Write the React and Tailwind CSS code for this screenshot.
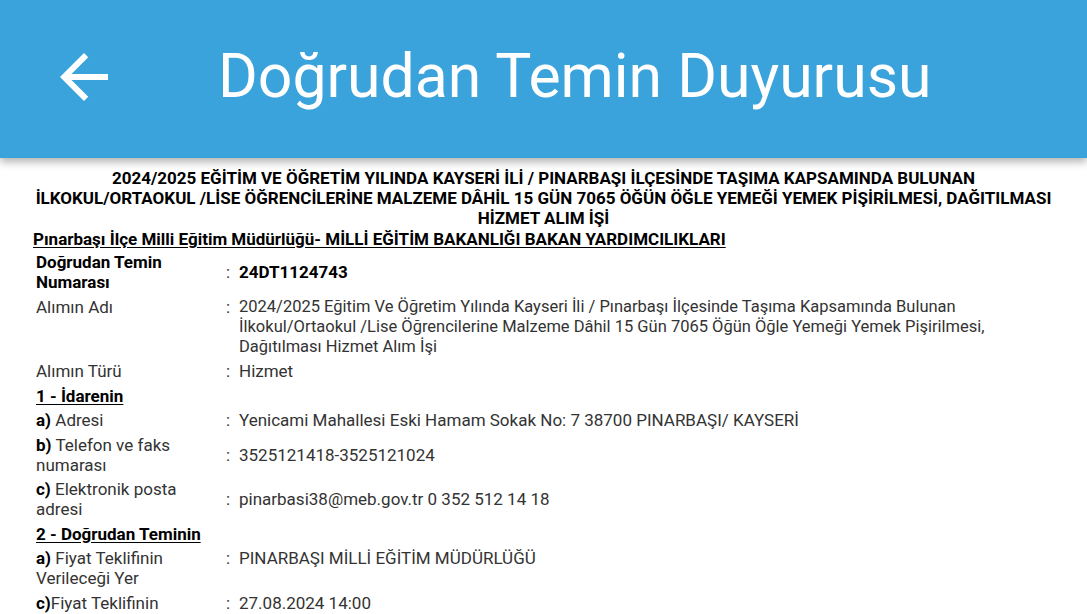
import React from "react";

const rows = [
  {
    label: <b className="font-bold text-black">Doğrudan Temin Numarası</b>,
    value: <b className="font-bold text-black">24DT1124743</b>,
    align: "items-center",
  },
  {
    label: "Alımın Adı",
    valueClass: "text-[16.5px]",
    value:
      "2024/2025 Eğitim Ve Öğretim Yılında Kayseri İli / Pınarbaşı İlçesinde Taşıma Kapsamında Bulunan İlkokul/Ortaokul /Lise Öğrencilerine Malzeme Dâhil 15 Gün 7065 Öğün Öğle Yemeği Yemek Pişirilmesi, Dağıtılması Hizmet Alım İşi",
  },
  { label: "Alımın Türü", value: "Hizmet" },
  { section: "1 - İdarenin" },
  { prefix: "a)", label: " Adresi", value: "Yenicami Mahallesi Eski Hamam Sokak No: 7 38700 PINARBAŞI/ KAYSERİ" },
  { prefix: "b)", label: " Telefon ve faks numarası", value: "3525121418-3525121024", align: "items-center" },
  { prefix: "c)", label: " Elektronik posta adresi", value: "pinarbasi38@meb.gov.tr 0 352 512 14 18", align: "items-center" },
  { section: "2 - Doğrudan Teminin" },
  { prefix: "a)", label: " Fiyat Teklifinin Verileceği Yer", value: "PINARBAŞI MİLLİ EĞİTİM MÜDÜRLÜĞÜ" },
  { prefix: "c)", label: "Fiyat Teklifinin", value: "27.08.2024 14:00" },
];

const Row = ({ row }) => {
  if (row.section) {
    return (
      <div className="py-[2.25px] px-[3px] font-bold text-black underline underline-offset-2">
        {row.section}
      </div>
    );
  }
  return (
    <div className={`flex py-[2.25px] ${row.align || "items-start"}`}>
      <div className="w-[191px] shrink-0 px-[3px]">
        {row.prefix && <b className="font-bold text-black">{row.prefix}</b>}
        {row.label}
      </div>
      <div className="flex w-[775px]">
        <span className="w-[15px] shrink-0 pl-[2px]">:</span>
        <div className={row.valueClass}>{row.value}</div>
      </div>
    </div>
  );
};

export default function App() {
  return (
    <div className="h-[614px] overflow-hidden bg-white font-['Roboto',sans-serif]">
      {/* App bar */}
      <div className="relative z-10 flex h-[158px] items-center bg-[#3ba3dc] shadow-[0_4px_8px_rgba(0,0,0,0.3)]">
        <button className="ml-[48px] -mt-[4px] text-white">
          <svg className="h-[72px] w-[72px]" viewBox="0 0 24 24" fill="currentColor">
            <path d="M20 11H7.83l5.59-5.59L12 4l-8 8 8 8 1.41-1.41L7.83 13H20v-2z" />
          </svg>
        </button>
        <h1 className="ml-[98px] pb-[4px] text-[60.7px] font-normal leading-none text-white">
          Doğrudan Temin Duyurusu
        </h1>
      </div>

      {/* Content */}
      <div className="px-[33px] pt-[10px] text-[17px] leading-[20px] text-[#333]">
        <p className="text-center font-bold text-black">
          2024/2025 EĞİTİM VE ÖĞRETİM YILINDA KAYSERİ İLİ / PINARBAŞI İLÇESİNDE TAŞIMA KAPSAMINDA BULUNAN
          <br />
          İLKOKUL/ORTAOKUL /LİSE ÖĞRENCİLERİNE MALZEME DÂHİL 15 GÜN 7065 ÖĞÜN ÖĞLE YEMEĞİ YEMEK PİŞİRİLMESİ, DAĞITILMASI
          <br />
          HİZMET ALIM İŞİ
        </p>
        <p className="mt-[1px] font-bold text-black underline underline-offset-2">
          Pınarbaşı İlçe Milli Eğitim Müdürlüğü- MİLLİ EĞİTİM BAKANLIĞI BAKAN YARDIMCILIKLARI
        </p>
        <div className="mt-[1px]">
          {rows.map((row, i) => (
            <Row key={i} row={row} />
          ))}
        </div>
      </div>
    </div>
  );
}
